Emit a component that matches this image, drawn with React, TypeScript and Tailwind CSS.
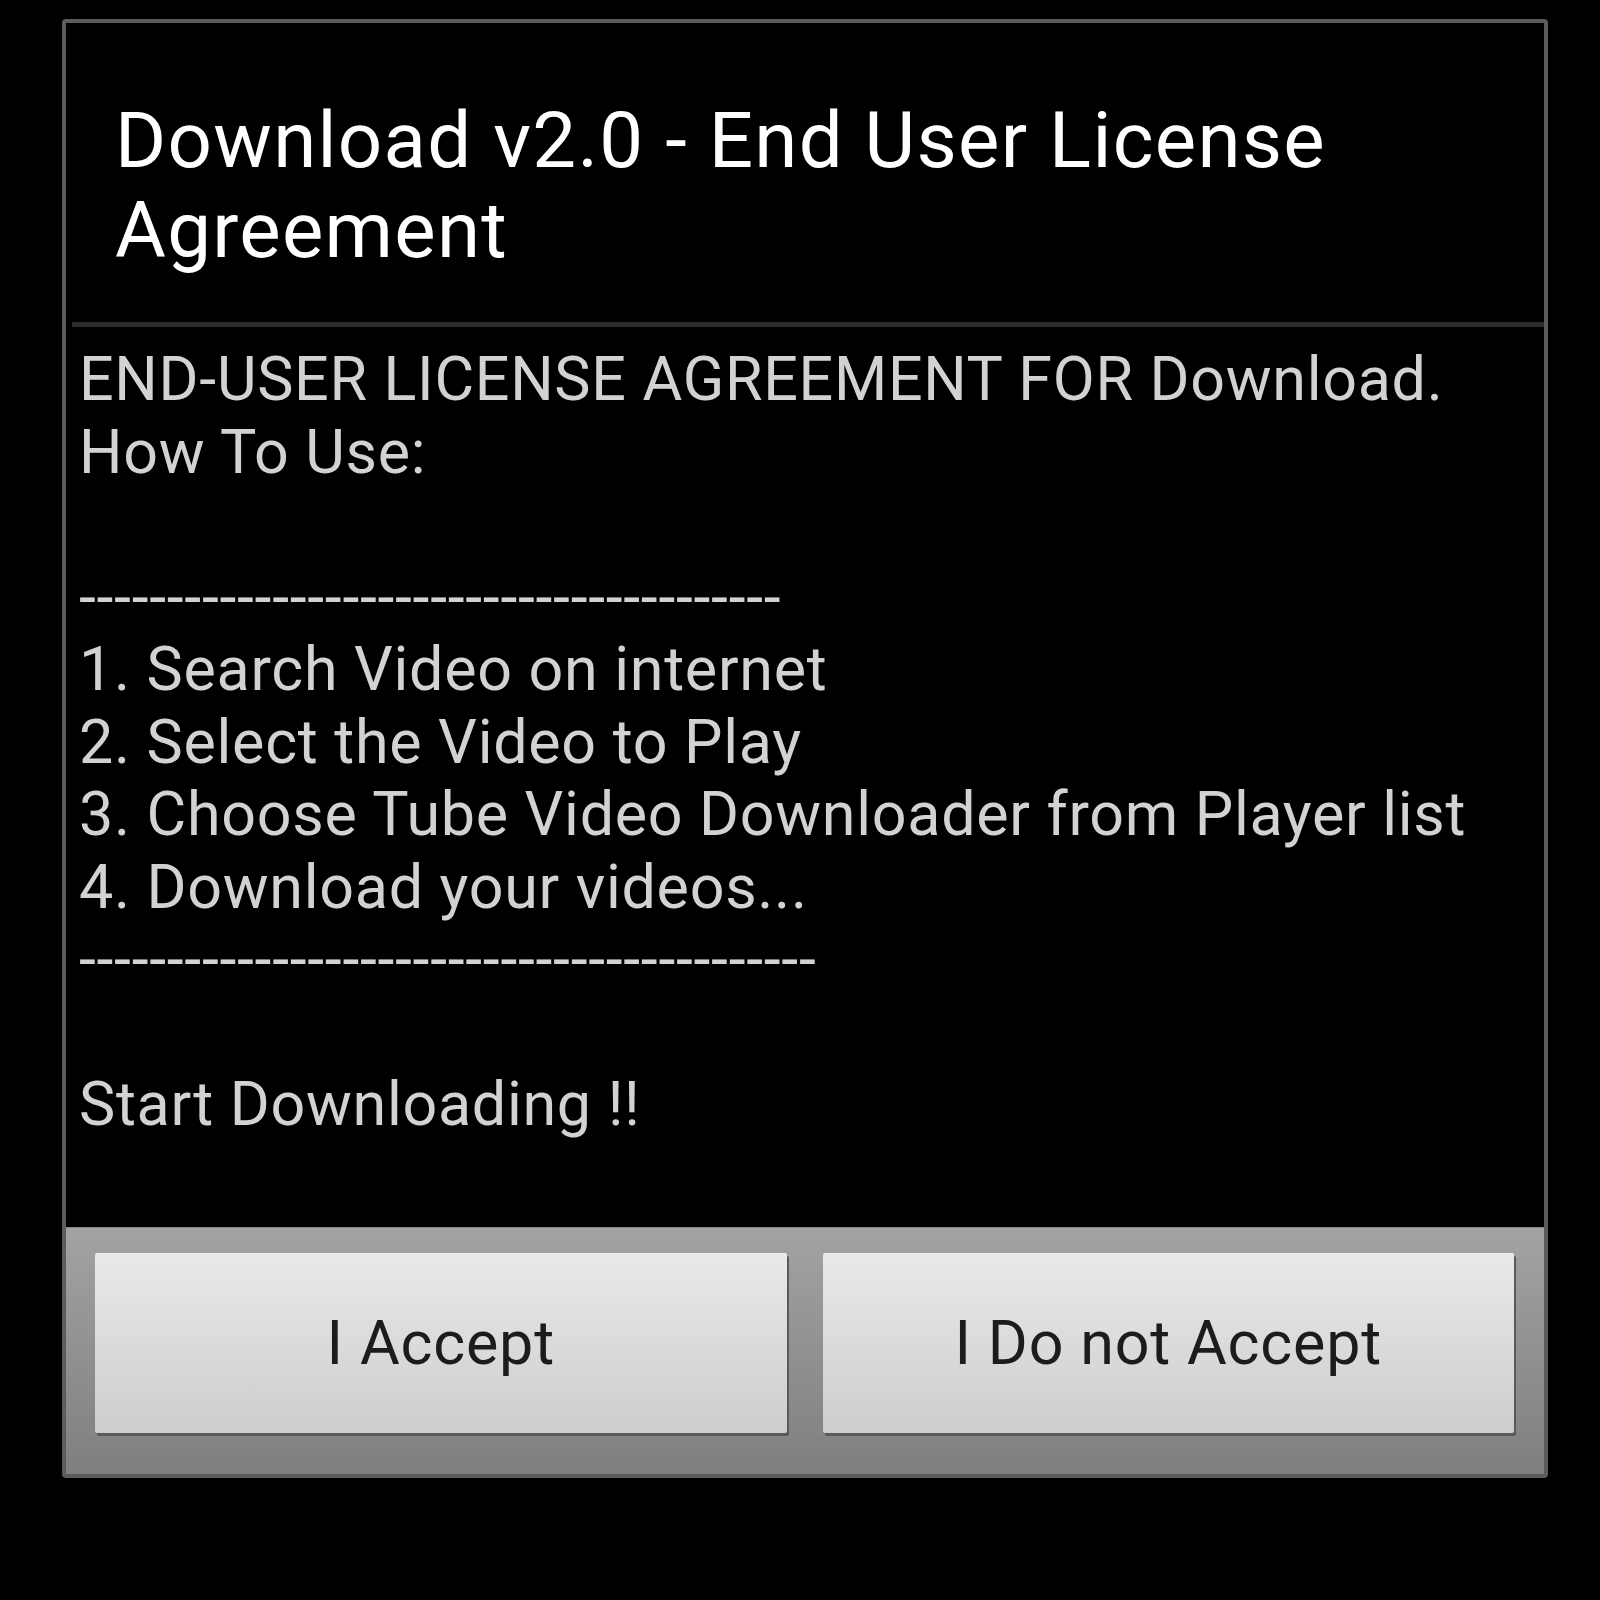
const bodyLines: string[] = [
  'END-USER LICENSE AGREEMENT FOR Download.',
  'How To Use:',
  '',
  '----------------------------------------',
  '1. Search Video on internet',
  '2. Select the Video to Play',
  '3. Choose Tube Video Downloader from Player list',
  '4. Download your videos...',
  '------------------------------------------',
  '',
  'Start Downloading !!',
];

const DialogButton = ({ label }: { label: string }) => (
  <button className="flex-1 h-[180px] flex items-center justify-center rounded-[2px] bg-gradient-to-b from-[#e9e9e9] to-[#cdcdcd] border-t border-[#f2f2f2] shadow-[2px_3px_0_#5a5a5a] text-[61px] tracking-[0.8px] text-[#1c1c1c]">
    {label}
  </button>
);

const App = () => {
  return (
    <main className="w-[1600px] h-[1600px] bg-black pt-[19px] pl-[62px] font-['Roboto','Liberation_Sans',sans-serif]">
      <div className="w-[1486px] h-[1459px] border-[4px] border-[#5c5c5c] rounded-[4px] flex flex-col bg-black">
        <header className="h-[299px] pt-[73px] pl-[49px]">
          <h1 className="text-[78px] leading-[90px] tracking-[1.3px] text-white">
            Download v2.0 - End User License
            <br />
            Agreement
          </h1>
        </header>
        <div className="h-[5px] ml-[6px] bg-[#2c2c2c]"></div>

        <section className="h-[900px] pt-[16px] pl-[13px] text-[61px] leading-[72.5px] tracking-[0.7px] text-[#d2d2d2]">
          {bodyLines.map((line, i) => (
            <p key={i} className="h-[72.5px] whitespace-pre">
              {line}
            </p>
          ))}
        </section>

        <footer className="h-[247px] flex gap-[36px] pt-[25px] pl-[29px] pr-[30px] bg-gradient-to-b from-[#a3a3a3] to-[#7f7f7f] border-t border-[#8a8a8a]">
          <DialogButton label="I Accept" />
          <DialogButton label="I Do not Accept" />
        </footer>
      </div>
    </main>
  );
};

export default App;
